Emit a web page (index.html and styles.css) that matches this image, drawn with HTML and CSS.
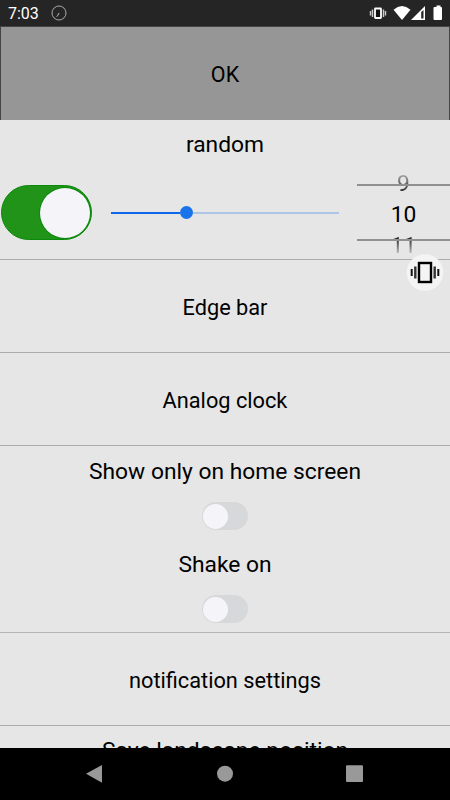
FILE: index.html
```html
<!DOCTYPE html>
<html lang="en">
<head>
<meta charset="utf-8">
<title>Settings</title>
<link rel="stylesheet" href="styles.css">
</head>
<body>
<header class="status">
  <span class="time">7:03</span>
  <svg class="clock" width="16" height="16" viewBox="0 0 16 16" fill="none" stroke="#aaa"><circle cx="8" cy="8" r="7"/><path d="M8 8 5.5 12M8 8 7 10.5" stroke-width=".8"/></svg>
  <svg class="indicators" width="74" height="16" viewBox="0 0 74 16">
    <path d="M2.500 6v4.500M4.500 4.500v7.500M15.500 4.500v7.500M17.500 6v4.500" stroke="#ccc" stroke-width="1.4"/>
    <rect x="7" y="3.500" width="6" height="9.500" rx=".5" fill="#111" stroke="#fff" stroke-width="1.8"/>
    <path d="M25.500 4.700Q34-2.500 42.500 4.700L34 15Z" fill="#fff"/>
    <path d="M43 15 57 1V15Z" fill="#fff"/><path d="M53.200 7 55.500 5V13.500H53.200Z" fill="#252525"/>
    <path d="M66.500 2h2V.5h4V2h.5q1 0 1 1V14q0 1-1 1h-6.500q-1 0-1-1V3q0-1 1-1Z" fill="#fff"/>
  </svg>
</header>
<main class="content">
  <button class="ok">OK</button>
  <section class="random">
    <h2 class="label">random</h2>
    <div class="controls">
      <div class="switch big"><span class="knob"></span></div>
      <div class="slider"><span class="filled"></span><span class="thumb"></span><span class="rest"></span></div>
      <div class="picker"><span class="prev">9</span><span class="current">10</span><span class="next">11</span></div>
    </div>
  </section>
  <section class="row">Edge bar</section>
  <section class="row">Analog clock</section>
  <section class="toggles">
    <div class="toggle"><span class="label">Show only on home screen</span><div class="switch"><span class="knob"></span></div></div>
    <div class="toggle"><span class="label">Shake on</span><div class="switch"><span class="knob"></span></div></div>
  </section>
  <section class="row">notification settings</section>
  <section class="last"><span class="label">Save landscape position</span></section>
</main>
<div class="bubble">
  <svg width="38" height="38" viewBox="0 0 38 38"><circle cx="19" cy="19.500" r="18.300" fill="#f4f4f4"/><path d="M5.700 16v7M32.300 16v7" stroke="#111" stroke-width="2"/><path d="M9.300 13.500v12M28.700 13.500v12" stroke="#333" stroke-width="2.400"/><rect x="13" y="10" width="12" height="19" fill="none" stroke="#000" stroke-width="2.400"/></svg>
</div>
<nav class="nav">
  <svg width="450" height="52" viewBox="0 0 450 52" fill="#999"><path d="M86 25.700 102 17V34.700Z"/><circle cx="225" cy="25.700" r="8"/><rect x="346" y="17.300" width="17" height="16.700" rx="1"/></svg>
</nav>
</body>
</html>
```
FILE: styles.css
```css
* { box-sizing: border-box; }
body {
  margin: 0;
  width: 450px;
  height: 800px;
  display: flex;
  flex-direction: column;
  position: relative;
  overflow: hidden;
  background: #e6e6e6;
  color: #000;
  font: 400 21.75px/28px Roboto, sans-serif;
}
.status {
  flex: none;
  height: 26px;
  display: flex;
  align-items: center;
  padding: 0 8px;
  background: #252525;
  color: #fff;
}
.time { font-size: 16px; line-height: 26px; padding-top: 2px; }
.clock { margin-left: 12px; }
.indicators { margin-left: auto; }
.content { flex: 1; min-height: 0; overflow: hidden; }
.ok {
  display: block;
  width: 450px;
  height: 94px;
  margin: 0;
  padding: 2px 0 0;
  border: 1px solid #444;
  border-width: 1px 1px 0;
  background: #969696;
  color: #000;
  font: 400 21.5px/28px Roboto, sans-serif;
}
.random { height: 140px; padding-top: 11px; border-bottom: 1px solid #ababab; }
.label { display: block; margin: 0; font-size: 22.8px; font-weight: 400; line-height: 28px; text-align: center; }
.controls { display: flex; align-items: center; height: 84px; margin-top: 11.5px; }
.switch {
  display: flex;
  align-items: center;
  width: 46px;
  height: 28px;
  padding: 1px;
  border-radius: 14px;
  background: #d7d8da;
}
.knob { width: 25px; height: 25px; border-radius: 50%; background: #f5f5f9; }
.big {
  flex: none;
  width: 91px;
  height: 55px;
  margin-left: 1px;
  justify-content: flex-end;
  border: 1px solid #0a8a0a;
  border-radius: 28px;
  background: #229319;
}
.big .knob { width: 50px; height: 50px; box-shadow: 0 0 0 1px #0a8a0a; }
.slider { flex: none; display: flex; align-items: center; width: 228px; margin-left: 19px; }
.filled { width: 69px; height: 2px; background: #0f66ea; }
.thumb { width: 13px; height: 13px; border-radius: 50%; background: #1a73e8; }
.rest { flex: 1; height: 2px; background: #adc6e8; }
.picker {
  position: relative;
  width: 93px;
  height: 84px;
  margin-left: 18px;
  font-size: 22.8px;
  text-align: center;
  overflow: hidden;
}
.picker::before {
  content: "";
  position: absolute;
  inset: 13px 0 14px;
  border: solid #909090;
  border-width: 2px 0;
}
.picker span { display: block; height: 31px; line-height: 31px; color: transparent; background-clip: text; -webkit-background-clip: text; }
.picker .prev { margin-top: -3px; background-image: linear-gradient(#aaa 20%, #222 80%); }
.picker .current { color: #000; }
.picker .next { background-image: linear-gradient(#222 25%, #ccc 80%); }
.row {
  display: flex;
  align-items: center;
  justify-content: center;
  height: 93px;
  padding-top: 3px;
  border-bottom: 1px solid #ababab;
}
.toggles { height: 187px; padding-top: 12px; border-bottom: 1px solid #b5b5b5; }
.toggle { height: 93px; }
.toggle .switch { margin: 16px auto 0; }
.last { padding-top: 11px; }
.bubble { position: absolute; left: 406px; top: 253px; width: 38px; height: 38px; }
.bubble svg { display: block; }
.nav { flex: none; height: 52px; background: #000; }
.nav svg { display: block; }
```
